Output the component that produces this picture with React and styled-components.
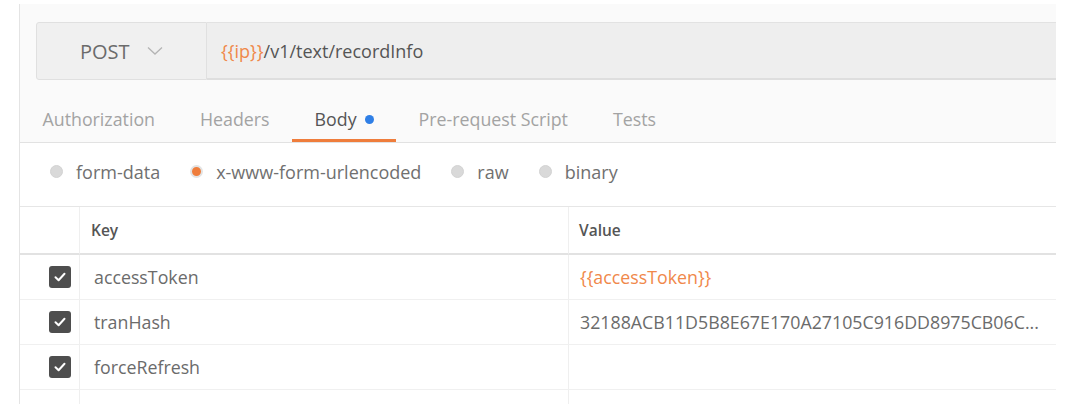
import React from 'react';
import styled, { createGlobalStyle } from 'styled-components';

const GlobalStyle = createGlobalStyle`
  body {
    margin: 0;
    background: #ffffff;
    font-family: "Open Sans", "Liberation Sans", sans-serif;
  }
`;

const Panel = styled.div`
  margin: 4px 0 0 19px;
  width: 1037px;
  height: 400px;
  background: #fafafa;
  border-left: 1px solid #e4e4e4;
  box-sizing: border-box;
  overflow: hidden;
`;

const UrlBar = styled.div`
  display: flex;
  margin: 18px 0 0 16px;
  height: 58px;
`;

const MethodBox = styled.div`
  width: 171px;
  box-sizing: border-box;
  display: flex;
  align-items: center;
  padding-left: 43px;
  gap: 17px;
  background: #f0f0f0;
  border: 1px solid #e0e0e0;
  border-radius: 3px 0 0 3px;
  font-size: 20px;
  color: #6b6b6b;
`;

const UrlInput = styled.div`
  flex: 1;
  display: flex;
  align-items: center;
  padding-left: 14px;
  background: #eeeeee;
  border-top: 1px solid #e2e2e2;
  border-bottom: 2px solid #dedede;
  font-size: 18px;
  color: #555555;
`;

const Var = styled.span`
  color: #f0884a;
`;

const Tabs = styled.div`
  display: flex;
  margin-top: 16px;
  border-bottom: 1px solid #e2e2e2;
`;

const Tab = styled.div`
  display: flex;
  align-items: center;
  gap: 8px;
  height: 46px;
  padding: 3px 22.5px 0;
  box-sizing: border-box;
  font-size: 17.8px;
  color: ${(p) => (p.active ? '#555555' : '#a3a3a3')};
  border-bottom: 3px solid ${(p) => (p.active ? '#ef7d3c' : 'transparent')};
`;

const Dot = styled.span`
  width: 9px;
  height: 9px;
  border-radius: 50%;
  background: #2f7fe6;
`;

const BodyArea = styled.div`
  background: #ffffff;
`;

const RadioRow = styled.div`
  display: flex;
  align-items: center;
  gap: 30px;
  height: 64px;
  padding: 0 0 6px 30px;
  box-sizing: border-box;
  border-bottom: 1px solid #e6e6e6;
`;

const RadioOption = styled.label`
  display: flex;
  align-items: center;
  gap: 13px;
  font-size: 18px;
  color: #707070;
`;

const RadioCircle = styled.span`
  width: 13px;
  height: 13px;
  border-radius: 50%;
  box-sizing: border-box;
  background: ${(p) => (p.checked ? '#ef7d3c' : '#d9d9d9')};
  border: ${(p) => (p.checked ? '2px solid #e3e3e3' : '1px solid #d3d3d3')};
`;

const Table = styled.div`
  display: grid;
  grid-template-columns: 60px 489px 1fr;
`;

const HeadCell = styled.div`
  height: 46px;
  display: flex;
  align-items: center;
  padding-left: ${(p) => p.pad || 0}px;
  border-bottom: 2px solid #e2e2e2;
  border-right: ${(p) => (p.last ? 'none' : '1px solid #efefef')};
  font-size: 15.5px;
  font-weight: 600;
  color: #555555;
`;

const Cell = styled.div`
  height: 45px;
  display: flex;
  align-items: center;
  justify-content: ${(p) => (p.check ? 'flex-end' : 'flex-start')};
  padding-left: ${(p) => p.pad || 0}px;
  padding-right: ${(p) => (p.check ? 8 : 0)}px;
  box-sizing: border-box;
  border-bottom: 1px solid #f0f0f0;
  border-right: ${(p) => (p.last ? 'none' : '1px solid #efefef')};
  font-size: 17.8px;
  color: ${(p) => (p.variable ? '#f0884a' : '#6b6b6b')};
  white-space: nowrap;
  overflow: hidden;
`;

const CheckBox = styled.span`
  width: 22px;
  height: 22px;
  border-radius: 3px;
  background: #4e4e4e;
  display: flex;
  align-items: center;
  justify-content: center;
`;

const Chevron = () => (
  <svg width="16" height="10" viewBox="0 0 16 10">
    <path d="M1 1.5 L8 8 L15 1.5" fill="none" stroke="#b4b4b4" strokeWidth="1.3" />
  </svg>
);

const Check = () => (
  <svg width="14" height="14" viewBox="0 0 14 14">
    <path d="M2.5 7.3 L5.6 10.2 L11.5 3.8" fill="none" stroke="#ffffff" strokeWidth="2" strokeLinecap="round" strokeLinejoin="round" />
  </svg>
);

const tabs = ['Authorization', 'Headers', 'Body', 'Pre-request Script', 'Tests'];
const bodyTypes = [
  { label: 'form-data' },
  { label: 'x-www-form-urlencoded', checked: true },
  { label: 'raw' },
  { label: 'binary' },
];
const params = [
  { key: 'accessToken', value: '{{accessToken}}', variable: true },
  { key: 'tranHash', value: '32188ACB11D5B8E67E170A27105C916DD8975CB06C...' },
  { key: 'forceRefresh', value: '' },
];

export default function App() {
  return (
    <>
      <GlobalStyle />
      <Panel>
        <UrlBar>
          <MethodBox>
            POST
            <Chevron />
          </MethodBox>
          <UrlInput>
            <Var>{'{{ip}}'}</Var>/v1/text/recordInfo
          </UrlInput>
        </UrlBar>
        <Tabs>
          {tabs.map((t) => (
            <Tab key={t} active={t === 'Body'}>
              {t}
              {t === 'Body' && <Dot />}
            </Tab>
          ))}
        </Tabs>
        <BodyArea>
          <RadioRow>
            {bodyTypes.map((b) => (
              <RadioOption key={b.label}>
                <RadioCircle checked={b.checked} />
                {b.label}
              </RadioOption>
            ))}
          </RadioRow>
          <Table>
            <HeadCell />
            <HeadCell pad={11}>Key</HeadCell>
            <HeadCell pad={10} last>Value</HeadCell>
            {params.map((p) => (
              <React.Fragment key={p.key}>
                <Cell check>
                  <CheckBox>
                    <Check />
                  </CheckBox>
                </Cell>
                <Cell pad={14}>{p.key}</Cell>
                <Cell pad={11} last variable={p.variable}>{p.value}</Cell>
              </React.Fragment>
            ))}
            <Cell />
            <Cell />
            <Cell last />
          </Table>
        </BodyArea>
      </Panel>
    </>
  );
}
